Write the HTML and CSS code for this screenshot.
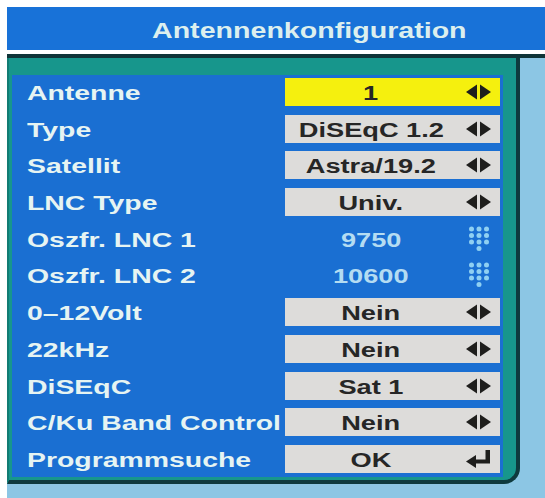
FILE: index.html
```html
<!DOCTYPE html>
<html lang="de">
<head>
<meta charset="utf-8">
<title>Antennenkonfiguration</title>
<link rel="stylesheet" href="styles.css">
</head>
<body>
<div class="screen">
  <header class="titlebar"><span class="title">Antennenkonfiguration</span></header>
  <div class="rule"></div>
  <div class="area">
    <div class="panel">
      <div class="menu">
        <div class="label"><span class="txt">Antenne</span></div>
        <div class="cell"><div class="box hl"><span class="val"><span class="txt">1</span></span><span class="ico"><svg class="lr" viewBox="0 0 25 16"><polygon points="0,8 11,0.5 11,15.5"/><polygon points="14,0.5 25,8 14,15.5"/></svg></span></div></div>

        <div class="label"><span class="txt">Type</span></div>
        <div class="cell"><div class="box"><span class="val"><span class="txt">DiSEqC 1.2</span></span><span class="ico"><svg class="lr" viewBox="0 0 25 16"><polygon points="0,8 11,0.5 11,15.5"/><polygon points="14,0.5 25,8 14,15.5"/></svg></span></div></div>

        <div class="label"><span class="txt">Satellit</span></div>
        <div class="cell"><div class="box"><span class="val"><span class="txt">Astra/19.2</span></span><span class="ico"><svg class="lr" viewBox="0 0 25 16"><polygon points="0,8 11,0.5 11,15.5"/><polygon points="14,0.5 25,8 14,15.5"/></svg></span></div></div>

        <div class="label"><span class="txt">LNC Type</span></div>
        <div class="cell"><div class="box"><span class="val"><span class="txt">Univ.</span></span><span class="ico"><svg class="lr" viewBox="0 0 25 16"><polygon points="0,8 11,0.5 11,15.5"/><polygon points="14,0.5 25,8 14,15.5"/></svg></span></div></div>

        <div class="label"><span class="txt">Oszfr. LNC 1</span></div>
        <div class="cell"><div class="box plain"><span class="val"><span class="txt">9750</span></span><span class="ico"><svg class="pad" viewBox="0 0 22 26"><circle cx="3.5" cy="3" r="2.5"/><circle cx="11" cy="3" r="2.5"/><circle cx="18.5" cy="3" r="2.5"/><circle cx="3.5" cy="9.5" r="2.5"/><circle cx="11" cy="9.5" r="2.5"/><circle cx="18.5" cy="9.5" r="2.5"/><circle cx="3.5" cy="16" r="2.5"/><circle cx="11" cy="16" r="2.5"/><circle cx="18.5" cy="16" r="2.5"/><circle cx="11" cy="22.5" r="2.5"/></svg></span></div></div>

        <div class="label"><span class="txt">Oszfr. LNC 2</span></div>
        <div class="cell"><div class="box plain"><span class="val"><span class="txt">10600</span></span><span class="ico"><svg class="pad" viewBox="0 0 22 26"><circle cx="3.5" cy="3" r="2.5"/><circle cx="11" cy="3" r="2.5"/><circle cx="18.5" cy="3" r="2.5"/><circle cx="3.5" cy="9.5" r="2.5"/><circle cx="11" cy="9.5" r="2.5"/><circle cx="18.5" cy="9.5" r="2.5"/><circle cx="3.5" cy="16" r="2.5"/><circle cx="11" cy="16" r="2.5"/><circle cx="18.5" cy="16" r="2.5"/><circle cx="11" cy="22.5" r="2.5"/></svg></span></div></div>

        <div class="label"><span class="txt">0–12Volt</span></div>
        <div class="cell"><div class="box"><span class="val"><span class="txt">Nein</span></span><span class="ico"><svg class="lr" viewBox="0 0 25 16"><polygon points="0,8 11,0.5 11,15.5"/><polygon points="14,0.5 25,8 14,15.5"/></svg></span></div></div>

        <div class="label"><span class="txt">22kHz</span></div>
        <div class="cell"><div class="box"><span class="val"><span class="txt">Nein</span></span><span class="ico"><svg class="lr" viewBox="0 0 25 16"><polygon points="0,8 11,0.5 11,15.5"/><polygon points="14,0.5 25,8 14,15.5"/></svg></span></div></div>

        <div class="label"><span class="txt">DiSEqC</span></div>
        <div class="cell"><div class="box"><span class="val"><span class="txt">Sat 1</span></span><span class="ico"><svg class="lr" viewBox="0 0 25 16"><polygon points="0,8 11,0.5 11,15.5"/><polygon points="14,0.5 25,8 14,15.5"/></svg></span></div></div>

        <div class="label"><span class="txt">C/Ku Band Control</span></div>
        <div class="cell"><div class="box"><span class="val"><span class="txt">Nein</span></span><span class="ico"><svg class="lr" viewBox="0 0 25 16"><polygon points="0,8 11,0.5 11,15.5"/><polygon points="14,0.5 25,8 14,15.5"/></svg></span></div></div>

        <div class="label"><span class="txt">Programmsuche</span></div>
        <div class="cell"><div class="box"><span class="val"><span class="txt">OK</span></span><span class="ico"><svg class="enter" viewBox="0 0 26 18"><path d="M19.5 0 H24 V13.5 H9 V9.5 H19.5 Z"/><polygon points="0,11.5 10,5 10,18"/></svg></span></div></div>
      </div>
    </div>
  </div>
</div>
</body>
</html>
```
FILE: styles.css
```css
html, body {
  margin: 0;
  padding: 0;
  background: #ffffff;
}

.screen {
  width: 545px;
  height: 498px;
  padding: 7px 0 0 7px;
  box-sizing: border-box;
  background: #ffffff;
  display: flex;
  flex-direction: column;
  overflow: hidden;
  font-family: "Liberation Sans", Arial, sans-serif;
  font-weight: bold;
}

.titlebar {
  height: 43px;
  flex: none;
  background: #1872d8;
  display: flex;
  align-items: center;
  padding-top: 5px;
  box-sizing: border-box;
}

.title {
  display: inline-block;
  margin-left: 145px;
  font-size: 22px;
  color: #dcefee;
  transform: scaleX(1.3);
  transform-origin: left center;
}

.rule {
  flex: none;
  height: 4px;
  margin-top: 4px;
  background: #0f3438;
}

.area {
  flex: 1;
  background: #8cc6e4;
  display: flex;
  align-items: flex-start;
}

.panel {
  width: 513px;
  box-sizing: border-box;
  background: #17968c;
  border-right: 4px solid #0e3a3e;
  border-bottom: 4px solid #0e3a3e;
  border-left: 2px solid #127c74;
  border-bottom-right-radius: 16px;
  padding: 17px 13px 3px 3px;
}

.menu {
  background: #1a6fd2;
  display: grid;
  grid-template-columns: 271px 220px;
  grid-auto-rows: 28px;
  row-gap: 8.7px;
  padding: 3px 0 4px 0;
}

.label {
  display: flex;
  align-items: center;
  padding-left: 15px;
  padding-top: 3px;
  font-size: 20px;
  color: #e6f4f2;
  white-space: nowrap;
}

.label .txt {
  display: inline-block;
  transform: scaleX(1.42);
  transform-origin: left center;
}

.cell {
  padding: 0 3px 0 2px;
}

.box {
  height: 100%;
  display: grid;
  grid-template-columns: 172px 43px;
  align-items: center;
  background: #dddcda;
  color: #262626;
  font-size: 20px;
}

.box.hl {
  background: #f5f00e;
}

.box.plain {
  background: transparent;
  color: #b4dcf2;
}

.val {
  text-align: center;
  padding-top: 3px;
  white-space: nowrap;
}

.val .txt {
  display: inline-block;
  transform: scaleX(1.36);
  transform-origin: center center;
}

.ico {
  display: flex;
  justify-content: center;
  align-items: center;
}

.lr {
  width: 25px;
  height: 16px;
  fill: #1e1e1c;
}

.pad {
  width: 22px;
  height: 26px;
  fill: #8fd0f2;
}

.enter {
  width: 26px;
  height: 18px;
  fill: #1e1e1c;
}
```
